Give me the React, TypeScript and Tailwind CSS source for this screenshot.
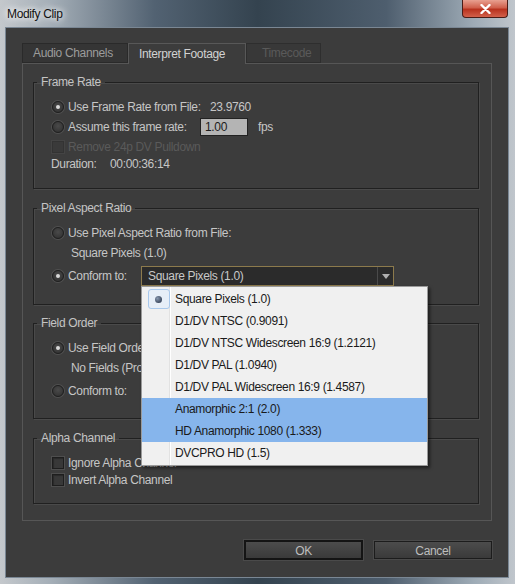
import type { ReactNode } from 'react'

const font = { fontFamily: '"Liberation Sans", Arial, sans-serif' }

function Radio({ checked = false }: { checked?: boolean }) {
  return (
    <span className="flex w-[12px] h-[12px] shrink-0 items-center justify-center rounded-full border border-[#202020] bg-[radial-gradient(circle_at_50%_40%,#4a4a4a,#2e2e2e)] shadow-[0_0_0_1px_#505050]">
      {checked && <span className="w-[4px] h-[4px] rounded-full bg-[#d8d8d8]" />}
    </span>
  )
}

function Checkbox({ disabled = false }: { disabled?: boolean }) {
  return (
    <span
      className={
        disabled
          ? 'w-[12px] h-[12px] shrink-0 border border-[#333] bg-[#3a3a3a] shadow-[0_0_0_1px_#444]'
          : 'w-[12px] h-[12px] shrink-0 border border-[#1e1e1e] bg-[#383838] shadow-[0_0_0_1px_#4e4e4e,inset_1px_1px_1px_#2a2a2a]'
      }
    />
  )
}

function Group({ title, className, children }: { title: string; className?: string; children: ReactNode }) {
  return (
    <fieldset
      className={
        'w-[446px] border border-[#202020] shadow-[inset_1px_1px_0_#4a4a4a,1px_1px_0_#4a4a4a] pl-[18px] pt-[8px] ' +
        (className ?? '')
      }
    >
      <legend className="-ml-[15px] px-[4px] leading-[14px] text-[#c4c4c4]">{title}</legend>
      {children}
    </fieldset>
  )
}

function Dropdown({ value }: { value: string }) {
  return (
    <div className="flex w-[253px] h-[20px] items-center border border-[#8c7a4c] bg-[#2b2b2b]">
      <span className="flex-1 pl-[6px] text-[#c8c8c8]">{value}</span>
      <span className="flex w-[16px] h-full items-center justify-center border-l border-[#4a4a4a]">
        <svg width="8" height="5" viewBox="0 0 8 5">
          <path d="M0 0h8L4 5z" fill="#b0b0b0" />
        </svg>
      </span>
    </div>
  )
}

const options = [
  'Square Pixels (1.0)',
  'D1/DV NTSC (0.9091)',
  'D1/DV NTSC Widescreen 16:9 (1.2121)',
  'D1/DV PAL (1.0940)',
  'D1/DV PAL Widescreen 16:9 (1.4587)',
  'Anamorphic 2:1 (2.0)',
  'HD Anamorphic 1080 (1.333)',
  'DVCPRO HD (1.5)',
]

function OptionList() {
  return (
    <div className="absolute left-0 top-full z-10 w-[287px] border border-[#9a9a9a] bg-[#f0f0f0] py-[1px] shadow-[2px_2px_3px_rgba(0,0,0,0.5)]">
      <div className="absolute left-[27px] top-0 bottom-0 w-[2px] border-l border-[#e2e2e2] bg-white" />
      {options.map((o, i) => (
        <div
          key={o}
          className={
            'relative flex h-[22px] items-center ' + (i === 5 || i === 6 ? 'bg-[#86b5ec]' : '')
          }
        >
          <span className="flex w-[33px] justify-center">
            {i === 0 && (
              <span className="flex w-[22px] h-[20px] items-center justify-center rounded-[3px] border border-[#a8c8ec] bg-[#e6eef8]">
                <span className="w-[7px] h-[7px] rounded-full bg-[radial-gradient(circle_at_35%_35%,#8898b0,#1e2a40)]" />
              </span>
            )}
          </span>
          <span className="text-[#1a1a1a]">{o}</span>
        </div>
      ))}
    </div>
  )
}

export default function App() {
  return (
    <div
      style={font}
      className="relative w-[515px] h-[584px] overflow-hidden text-[12px] tracking-[-0.35px] bg-[linear-gradient(90deg,#c4c8cc_0%,#a4aeb7_10%,#526272_30%,#34434f_50%,#4e5e6e_75%,#9eabb6_92%,#c0c6cc_100%)]"
    >
      {/* title bar */}
      <div className="flex h-[27px] items-center pl-[7px]">
        <span className="text-[#111] [text-shadow:0_0_8px_#fff,0_0_6px_#fff]">Modify Clip</span>
      </div>
      <div className="absolute right-[7px] top-0 flex w-[46px] h-[18px] items-center justify-center rounded-b-[4px] border border-t-0 border-[#4a1c16] bg-[linear-gradient(180deg,#e8a090_0%,#d0604c_45%,#b8321e_55%,#d2604a_100%)]">
        <svg width="11" height="10" viewBox="0 0 11 10">
          <path d="M1.5 1l8 8M9.5 1l-8 8" stroke="#fff" strokeWidth="2.4" strokeLinecap="round" />
        </svg>
      </div>

      {/* window body */}
      <div className="ml-[5px] w-[504px] h-[551px] border border-[#7a8794] bg-[#3c3c3c] pl-[16px] pt-[15px]">
        {/* tabs */}
        <div className="relative z-[1] -mb-px flex h-[21px]">
          <div className="flex w-[106px] h-[20px] items-center border border-[#2a2a2a] bg-[#353535] pl-[10px] text-[#9c9c9c]">
            Audio Channels
          </div>
          <div className="flex w-[118px] h-[21px] items-center border border-b-0 border-[#585858] bg-[#3c3c3c] pl-[10px] text-[#d2d2d2]">
            Interpret Footage
          </div>
          <div className="flex w-[75px] h-[20px] items-center border border-[#2e2e2e] bg-[#383838] pl-[15px] text-[#5a5a5a]">
            Timecode
          </div>
        </div>

        {/* tab panel */}
        <div className="w-[470px] h-[458px] border border-[#565656] pl-[10px] pt-[11px]">
          <Group title="Frame Rate" className="pb-[17px]">
            <div className="flex h-[20px] items-center gap-[4px] whitespace-nowrap">
              <Radio checked />
              <span className="w-[138px] shrink-0 text-[#c6c6c6]">Use Frame Rate from File:</span>
              <span className="text-[#c6c6c6]">23.9760</span>
            </div>
            <div className="flex h-[20px] items-center gap-[4px] whitespace-nowrap">
              <Radio />
              <span className="w-[128px] shrink-0 text-[#c6c6c6]">Assume this frame rate:</span>
              <span className="flex w-[48px] h-[18px] items-center border border-[#222] bg-[#b4b4b4] pl-[4px] text-[#1c1c1c]">
                1.00
              </span>
              <span className="ml-[6px] text-[#c6c6c6]">fps</span>
            </div>
            <div className="flex h-[20px] items-center gap-[4px]">
              <Checkbox disabled />
              <span className="text-[#5a5a5a]">Remove 24p DV Pulldown</span>
            </div>
            <div className="-ml-px flex h-[14px] items-center text-[#c6c6c6]">
              <span className="w-[59px]">Duration:</span>
              <span>00:00:36:14</span>
            </div>
          </Group>

          <Group title="Pixel Aspect Ratio" className="mt-[12px] pb-[15px]">
            <div className="flex h-[20px] items-center gap-[4px]">
              <Radio />
              <span className="text-[#c6c6c6]">Use Pixel Aspect Ratio from File:</span>
            </div>
            <div className="flex h-[20px] items-center pl-[19px] text-[#c6c6c6]">Square Pixels (1.0)</div>
            <div className="flex h-[26px] items-center gap-[4px]">
              <Radio checked />
              <span className="w-[69px] text-[#c6c6c6]">Conform to:</span>
              <div className="relative">
                <Dropdown value="Square Pixels (1.0)" />
                <OptionList />
              </div>
            </div>
          </Group>

          <Group title="Field Order" className="mt-[11px] pb-[14px]">
            <div className="flex h-[20px] items-center gap-[4px]">
              <Radio checked />
              <span className="text-[#c6c6c6]">Use Field Order from File:</span>
            </div>
            <div className="flex h-[20px] items-center pl-[19px] text-[#c6c6c6]">No Fields (Progressive Scan)</div>
            <div className="flex h-[26px] items-center gap-[4px]">
              <Radio />
              <span className="w-[69px] text-[#c6c6c6]">Conform to:</span>
              <Dropdown value="No Fields (Progressive Scan)" />
            </div>
          </Group>

          <Group title="Alpha Channel" className="mt-[12px] pt-[9px] pb-[15px]">
            <div className="flex h-[17px] items-center gap-[4px]">
              <Checkbox />
              <span className="text-[#c6c6c6]">Ignore Alpha Channel</span>
            </div>
            <div className="flex h-[17px] items-center gap-[4px]">
              <Checkbox />
              <span className="text-[#c6c6c6]">Invert Alpha Channel</span>
            </div>
          </Group>
        </div>

        {/* buttons */}
        <div className="mt-[19px] flex w-[470px] justify-end gap-[11px]">
          <button className="w-[119px] h-[20px] border-2 border-[#141414] bg-[linear-gradient(180deg,#4c4c4c,#3a3a3a)] text-[#bdbdbd] shadow-[0_0_0_1px_#4a4a4a]">
            OK
          </button>
          <button className="mt-px w-[118px] h-[18px] border border-[#1c1c1c] bg-[linear-gradient(180deg,#4c4c4c,#3a3a3a)] text-[#bdbdbd] shadow-[0_0_0_1px_#4a4a4a]">
            Cancel
          </button>
        </div>
      </div>
    </div>
  )
}
